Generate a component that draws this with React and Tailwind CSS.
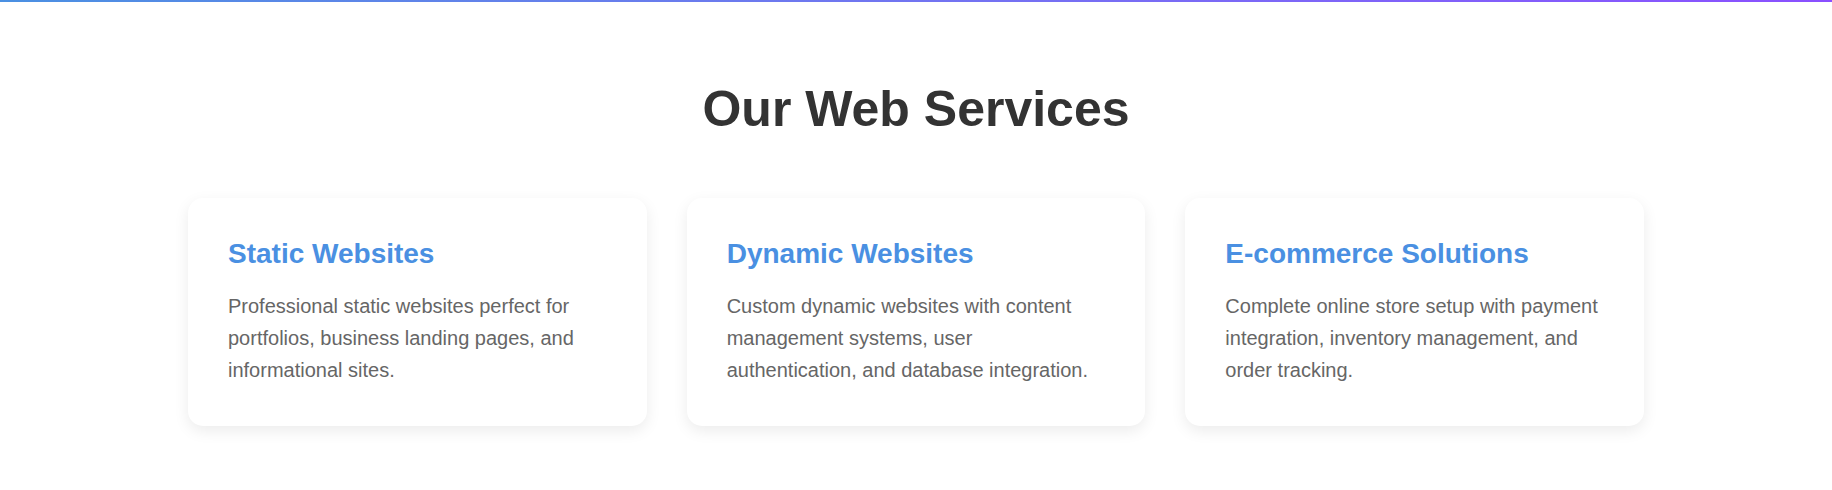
import React from 'react';

const services = [
  {
    title: 'Static Websites',
    description:
      'Professional static websites perfect for portfolios, business landing pages, and informational sites.',
  },
  {
    title: 'Dynamic Websites',
    description:
      'Custom dynamic websites with content management systems, user authentication, and database integration.',
  },
  {
    title: 'E-commerce Solutions',
    description:
      'Complete online store setup with payment integration, inventory management, and order tracking.',
  },
];

const ServiceCard = ({ service }) => {
  return (
    <div className="bg-white rounded-[15px] shadow-[0_5px_15px_rgba(0,0,0,0.08)] p-10">
      <h3 className="text-[28px] leading-[normal] font-bold text-[#4a90e2] mb-5">
        {service.title}
      </h3>
      <p className="text-[20px] leading-[1.6] text-[#666]">{service.description}</p>
    </div>
  );
};

const App = () => {
  return (
    <div className="min-h-[490px] bg-white font-['Liberation_Sans',Arial,sans-serif]">
      <div className="h-[2px] bg-gradient-to-r from-[#4a90e2] to-[#8a4fff]"></div>

      <section className="pt-[78px] pb-[60px]">
        <h2 className="text-[50px] leading-[normal] font-bold text-[#333] text-center mb-[60px]">
          Our Web Services
        </h2>

        <div className="max-w-[1456px] mx-auto grid grid-cols-3 gap-10">
          {services.map(service => (
            <ServiceCard key={service.title} service={service} />
          ))}
        </div>
      </section>
    </div>
  );
};

export default App;
